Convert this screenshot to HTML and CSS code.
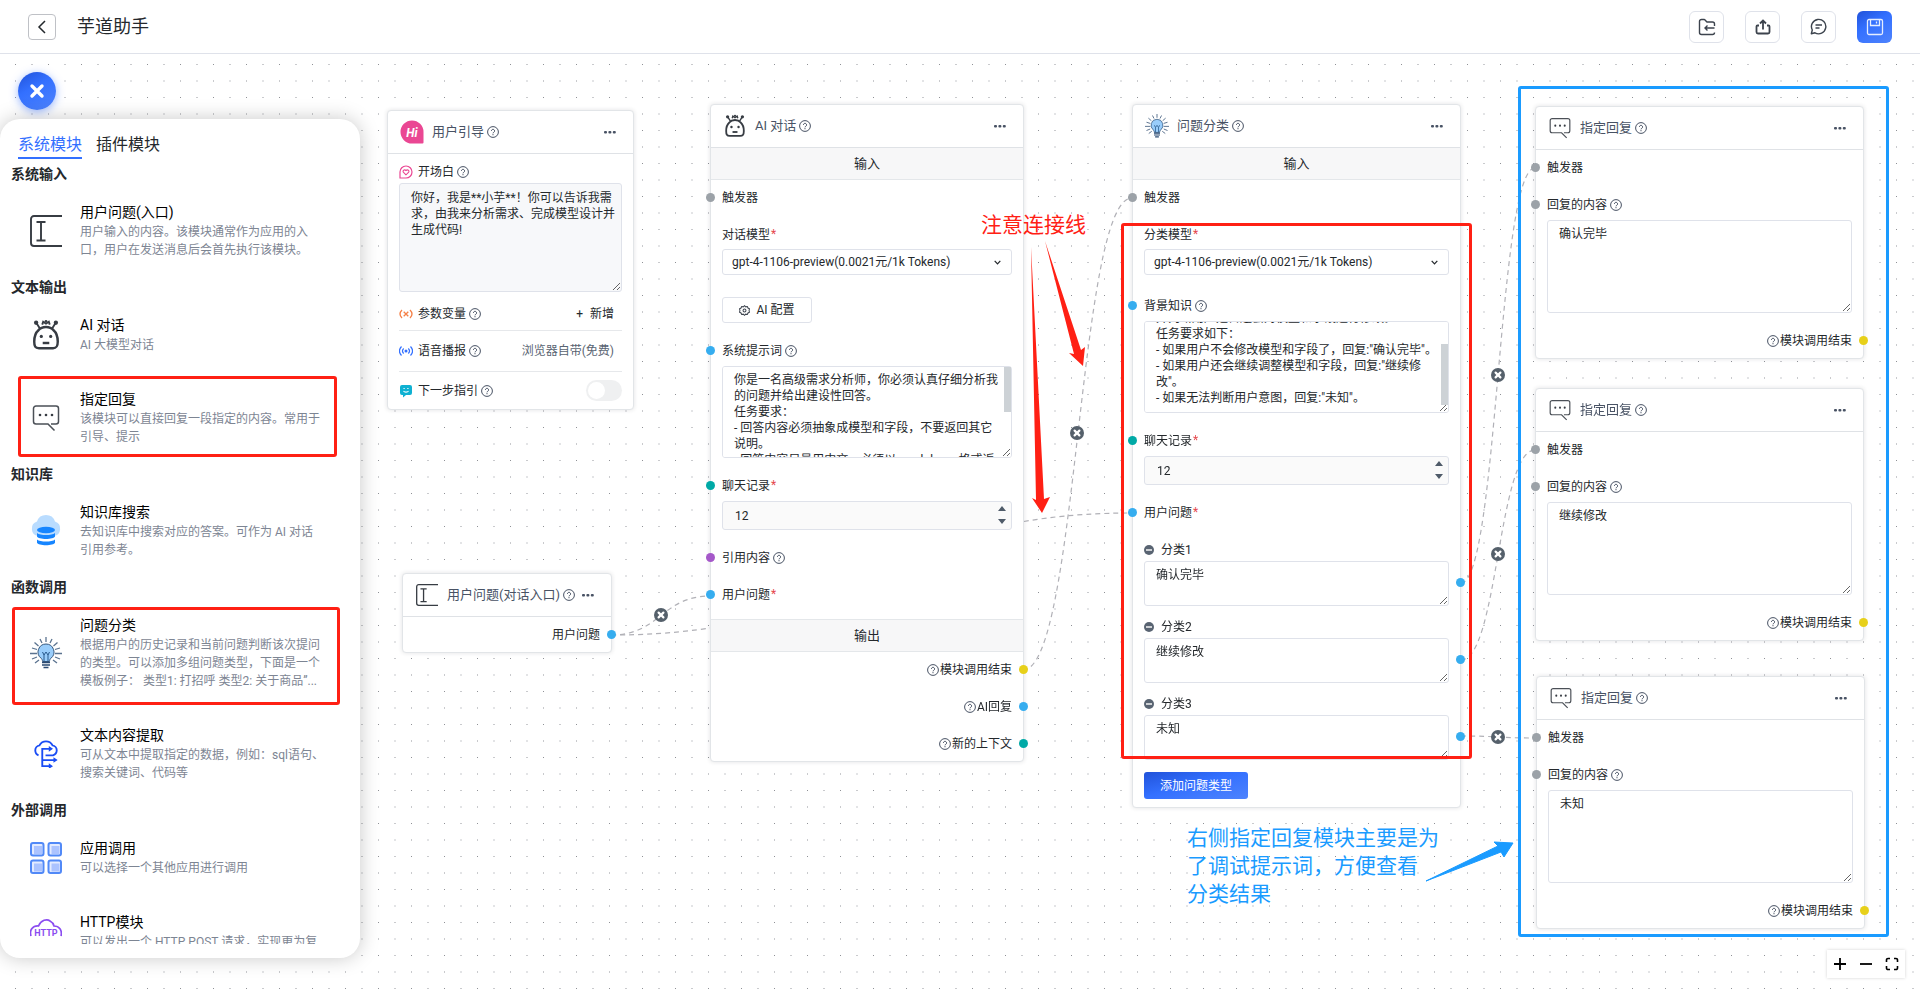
FILE: index.html
```html
<!DOCTYPE html>
<html lang="zh-CN">
<head>
<meta charset="utf-8">
<meta name="viewport" content="width=device-width, initial-scale=1">
<title>芋道助手</title>
<link rel="stylesheet" href="styles.css">
</head>
<body>
<svg class="sprite" aria-hidden="true">
  <symbol id="i-help" viewBox="0 0 12 12"><circle cx="6" cy="6" r="5.4" fill="none" stroke="currentColor" stroke-width="1"/><path d="M4.4 4.9a1.6 1.6 0 1 1 2.4 1.4c-.6.3-.8.5-.8 1" fill="none" stroke="currentColor" stroke-width="1"/><circle cx="6" cy="8.7" r=".6" fill="currentColor"/></symbol>
  <symbol id="i-more" viewBox="0 0 12 4"><rect x="0" y="1" width="3" height="2.6" rx="1" fill="currentColor"/><rect x="4.4" y="1" width="3" height="2.6" rx="1" fill="currentColor"/><rect x="8.8" y="1" width="3" height="2.6" rx="1" fill="currentColor"/></symbol>
  <symbol id="i-input" viewBox="0 0 32 32"><path d="M32 1H4a3 3 0 0 0-3 3v24a3 3 0 0 0 3 3h28M6.500 7h9M6.500 25.500h9M11 7v18.500" fill="none" stroke="#373c43" stroke-width="1.900"/></symbol>
  <symbol id="i-robot" viewBox="0 0 30 34"><path d="M7 12C9 9.500 12 8.500 15 8.500s6 1 8 3.500c3.500 3 4.500 7 4.500 12 0 5-1 7-5 7h-15c-4 0-5-2-5-7 0-5 1-9 4.500-12Z" fill="none" stroke="#373c43" stroke-width="2.600"/><path d="M8.500 10 5 4.500M21.500 10 25 4.500M11 6l1-3 3 2 3-2 1 3" fill="none" stroke="#373c43" stroke-width="2"/><circle cx="4.500" cy="4" r="2.300" fill="#373c43"/><circle cx="25.500" cy="4" r="2.300" fill="#373c43"/><circle cx="15" cy="2.500" r="1.500" fill="#373c43"/><circle cx="10" cy="18.500" r="1.700" fill="#373c43"/><circle cx="20" cy="18.500" r="1.700" fill="#373c43"/><path d="M11.500 25.500h7" stroke="#373c43" stroke-width="2.600"/></symbol>
  <symbol id="i-reply" viewBox="0 0 28 28"><path d="M19 20h5a2.500 2.500 0 0 0 2.500-2.500v-13A2.500 2.500 0 0 0 24 2H4a2.500 2.500 0 0 0-2.500 2.500v13A2.500 2.500 0 0 0 4 20h12l6.500 6.500" fill="none" stroke="#4b5057" stroke-width="1.500"/><circle cx="8" cy="11" r="1.300" fill="#373c43"/><circle cx="14" cy="11" r="1.300" fill="#373c43"/><circle cx="20" cy="11" r="1.300" fill="#373c43"/></symbol>
  <symbol id="i-bulb" viewBox="0 0 32 32"><g stroke="#5b7390" stroke-width="1.300"><path d="M16 0v5M10 2l2 4M22 2l-2 4M4.500 5.500 8.500 9M27.500 5.500 23.500 9M2 11l5 1.500M30 11l-5 1.500M0 16.500h7M32 16.500h-7M2 22l5-2M30 22l-5-2M5 26l4-3M27 26l-4-3"/></g><path d="M16 7a8 8 0 0 0-5 14.200c1 .8 1.500 2 1.500 3.300h7c0-1.300.5-2.500 1.500-3.300A8 8 0 0 0 16 7Z" fill="#99cdfb" stroke="#39597d" stroke-width="1"/><path d="m12.500 15 1.500 3 2-3 2 3 1.500-3M14 18v6M18 18v6" fill="none" stroke="#27588b" stroke-width="1"/><path d="M12 25.500h8M12 28h8M13.500 30.500h5" stroke="#2a4a72" stroke-width="1.400"/></symbol>
  <symbol id="i-cloud-db" viewBox="0 0 32 32"><path d="M8 21a7.500 7.500 0 0 1-1-14.500 9.500 9.500 0 0 1 18 0A7.500 7.500 0 0 1 24 21Z" fill="#b9dcff"/><ellipse cx="16" cy="15" rx="9" ry="3.300" fill="#1685ff"/><path d="M7 18c3 2.700 15 2.700 18 0v3.500c-1 3.300-17 3.300-18 0ZM7 24.500c3 2.700 15 2.700 18 0v3.200c-1 3.300-17 3.300-18 0Z" fill="#1685ff"/></symbol>
  <symbol id="i-extract" viewBox="0 0 26 30"><g fill="none" stroke="#1a4df5" stroke-width="2"><path d="M5 16.500C2.500 15.500 1.500 13.500 1.500 11c0-2.500 2-5 4.500-5.300C7.500 3 10 1.500 13 1.500s5.500 1.500 7 4.200c2.500.3 4.500 2.800 4.500 5.300s-1.500 4.500-4 5.500h-8M9 9.500h8M9 8.500V28h9M8 21.500h14"/></g><path d="m16 6.500 4.500 3-4.500 3ZM21 18.500l4.500 3-4.500 3ZM16 25l4.500 3-4.500 3Z" fill="#1a4df5"/></symbol>
  <symbol id="i-apps" viewBox="0 0 32 32"><g fill="#e3ebff" stroke="#5189f7" stroke-width="2"><rect x="1" y="1" width="12.500" height="12.500" rx="2"/><rect x="18.500" y="1" width="12.500" height="12.500" rx="2"/><rect x="1" y="18.500" width="12.500" height="12.500" rx="2"/><rect x="18.500" y="18.500" width="12.500" height="12.500" rx="2"/></g><path d="M4 4h8v8H4ZM21.500 4h8v8h-8ZM4 21.500h8v8H4ZM21.500 21.500h8v8h-8Z" fill="#abc3ff"/></symbol>
  <symbol id="i-minus" viewBox="0 0 10 10"><circle cx="5" cy="5" r="5" fill="#596472"/><path d="M2 5h6" stroke="#fff" stroke-width="1.400"/></symbol>
  <symbol id="i-chevron" viewBox="0 0 8 8"><path d="m1.500 2.500 2.500 2.700 2.500-2.700" fill="none" stroke="#24282c" stroke-width="1.100"/></symbol>
  <symbol id="i-steps" viewBox="0 0 8 18"><path d="M4 0 8 5H0ZM4 18 0 13h8Z" fill="#4f5b69"/></symbol>
  <symbol id="i-cut" viewBox="0 0 14 14"><circle cx="7" cy="7" r="7" fill="#55606b"/><path d="m4.600 4.600 4.800 4.800M9.400 4.600 4.600 9.400" stroke="#fff" stroke-width="2.200" stroke-linecap="round"/></symbol>
</svg>

<header class="topbar">
  <button class="back" aria-label="返回"><svg width="14" height="14" viewBox="0 0 14 14"><path d="M10 1 4 7l6 6" fill="none" stroke="#24282c" stroke-width="1.500"/></svg></button>
  <h1 class="topbar-title">芋道助手</h1>
  <div class="topbar-actions">
    <button class="tool" aria-label="导入"><svg width="18" height="18" viewBox="0 0 18 18"><path d="M16.500 8V6a2 2 0 0 0-2-2H9L7.500 2.500C7 1.700 6.500 1.500 6 1.500H3.500a2 2 0 0 0-2 2v11a2 2 0 0 0 2 2h11a2 2 0 0 0 2-2M16.500 10H7M9.500 7.500 7 10l2.500 2.500" fill="none" stroke="#3c434d" stroke-width="1.400"/></svg></button>
    <button class="tool" aria-label="导出"><svg width="16" height="16" viewBox="0 0 16 16"><path d="M4 6.500H2.500a1 1 0 0 0-1 1v5.500a1.500 1.500 0 0 0 1.500 1.500h10a1.500 1.500 0 0 0 1.500-1.500V7.500a1 1 0 0 0-1-1H12M8 10.500V2M5 4.500l3-3 3 3" fill="none" stroke="#3c434d" stroke-width="1.800"/></svg></button>
    <button class="tool" aria-label="对话"><svg width="17" height="17" viewBox="0 0 17 17"><path d="M1.300 15.700 2.300 12A7.200 7.200 0 1 1 5 14.800ZM5.500 7h6.500M5.500 10h4" fill="none" stroke="#3c434d" stroke-width="1.400" stroke-linejoin="round"/></svg></button>
    <button class="tool tool-save" aria-label="保存"><svg width="18" height="18" viewBox="0 0 18 18"><path d="M3 1.500h12A1.500 1.500 0 0 1 16.500 3v12a1.500 1.500 0 0 1-1.500 1.500H3A1.500 1.500 0 0 1 1.500 15V3A1.500 1.500 0 0 1 3 1.500ZM4.500 1.500v6h9v-6M10.500 3.500v2" fill="none" stroke="#e5edff" stroke-width="1.300"/></svg></button>
  </div>
</header>

<main class="canvas">
  <svg class="dots" aria-hidden="true">
    <defs><pattern id="grid" width="33" height="33" patternUnits="userSpaceOnUse" x="15" y="10"><rect width="1" height="1" fill="#8f9196"/><rect x="16" width="2" height="1" fill="#c9cacd"/><rect y="16" width="1" height="2" fill="#c9cacd"/><rect x="16" y="16" width="2" height="2" fill="#e3e4e6"/></pattern></defs>
    <rect width="100%" height="100%" fill="url(#grid)"/>
  </svg>
  <svg class="edges" width="1920" height="939" viewBox="0 54 1920 939" aria-hidden="true">
    <g class="edge-lines">
      <path d="M611 635C661 635 661 596 711 596"/>
      <path d="M611 635C871 635 871 513 1132 513"/>
      <path d="M1023 670C1078 670 1078 198 1132 198"/>
      <path d="M1461 583C1498 583 1498 168 1535 168"/>
      <path d="M1461 660C1498 660 1498 450 1535 450"/>
      <path d="M1461 736C1498 736 1498 738 1536 738"/>
    </g>
    <use href="#i-cut" x="654" y="608" width="14" height="14"/>
    <use href="#i-cut" x="1070" y="426" width="14" height="14"/>
    <use href="#i-cut" x="1491" y="368" width="14" height="14"/>
    <use href="#i-cut" x="1491" y="547" width="14" height="14"/>
    <use href="#i-cut" x="1491" y="730" width="14" height="14"/>
  </svg>

  <section class="node node-guide">
    <header class="node-head"><svg class="node-icon" viewBox="0 0 24 24"><path d="M12 .5A11.500 11.500 0 0 0 12 23.500H22.500a1 1 0 0 0 1-1V12A11.500 11.500 0 0 0 12 .5Z" fill="#ea4793"/><text x="12" y="16.500" text-anchor="middle" class="hi-mark">Hi</text></svg><h2>用户引导</h2><svg class="help"><use href="#i-help"/></svg><button class="more" aria-label="更多"><svg><use href="#i-more"/></svg></button></header>
    <div class="node-body guide-body">
      <label class="guide-label" for="welcome"><svg class="guide-icon" viewBox="0 0 14 14"><path d="M1 13V7a6 6 0 1 1 6 6Z" fill="#fff" stroke="#ea4793" stroke-width="1.200"/><path d="M7 9.800 4.300 7.200c-1-1.400 1-3.300 2.700-1.700 1.700-1.600 3.700.3 2.700 1.700Z" fill="none" stroke="#ea4793" stroke-width="1.100"/></svg>开场白<svg class="help"><use href="#i-help"/></svg></label>
      <textarea id="welcome" class="box guide-text">你好，我是**小芋**！你可以告诉我需
求，由我来分析需求、完成模型设计并
生成代码!</textarea>
      <div class="guide-row guide-vars"><span class="guide-label"><svg class="guide-icon" viewBox="0 0 14 14"><path d="M3 3C.5 5.500.5 8.500 3 11M11 3c2.500 2.500 2.500 5.500 0 8M4.700 4.700l4.600 4.600M9.300 4.700 4.700 9.300" fill="none" stroke="#f58047" stroke-width="1.300"/></svg>参数变量<svg class="help"><use href="#i-help"/></svg></span><button class="plain"><span>+</span>新增</button></div>
      <div class="guide-row"><span class="guide-label"><svg class="guide-icon" viewBox="0 0 14 14"><circle cx="7" cy="7" r="1.500" fill="#3370ff"/><path d="M4.700 4.500c-1.500 1.500-1.500 3.500 0 5M9.300 4.500c1.500 1.500 1.500 3.500 0 5M2.500 2.500c-2.500 2.700-2.500 6.300 0 9M11.500 2.500c2.500 2.700 2.500 6.300 0 9" fill="none" stroke="#3370ff" stroke-width="1.200"/></svg>语音播报<svg class="help"><use href="#i-help"/></svg></span><button class="plain plain-muted">浏览器自带(免费)</button></div>
      <div class="guide-row guide-last"><label class="guide-label" for="next-step"><svg class="guide-icon" viewBox="0 0 14 14"><path d="M3 1h8a2 2 0 0 1 2 2v6a2 2 0 0 1-2 2H7l-3 2.500V11H3a2 2 0 0 1-2-2V3a2 2 0 0 1 2-2Z" fill="#0fb1d2"/><path d="M4.500 4.500h1.200M8.300 4.500h1.200M4.500 7c1 1.500 4 1.500 5 0" fill="none" stroke="#fff" stroke-width="1.100"/></svg>下一步指引<svg class="help"><use href="#i-help"/></svg></label><input class="switch" type="checkbox" id="next-step"></div>
    </div>
  </section>

  <section class="node node-entry">
    <header class="node-head"><svg class="node-icon node-icon-s"><use href="#i-input"/></svg><h2>用户问题(对话入口)</h2><svg class="help"><use href="#i-help"/></svg><button class="more" aria-label="更多"><svg><use href="#i-more"/></svg></button></header>
    <div class="node-body"><div class="row row-out">用户问题<i class="port port-r blue"></i></div></div>
  </section>

  <section class="node node-ai">
    <header class="node-head"><svg class="node-icon"><use href="#i-robot"/></svg><h2>AI 对话</h2><svg class="help"><use href="#i-help"/></svg><button class="more" aria-label="更多"><svg><use href="#i-more"/></svg></button></header>
    <h3 class="band">输入</h3>
    <div class="node-body body-inputs">
      <div class="row"><i class="port grey"></i>触发器</div>
      <div class="field field-model"><label class="row" for="ai-model">对话模型<b class="req">*</b></label><div class="select-wrap"><select id="ai-model" class="box select"><option>gpt-4-1106-preview(0.0021元/1k Tokens)</option></select><svg class="chevron"><use href="#i-chevron"/></svg></div></div>
      <button class="box config"><svg width="11" height="11" viewBox="0 0 12 12"><path d="M6 .8 7.300 2l1.800-.4.700 1.700 1.600.9L11 6l.4 1.800-1.600.9-.7 1.700L7.300 10 6 11.200 4.700 10l-1.800.4-.7-1.700-1.600-.9L1 6l-.4-1.800 1.600-.9.700-1.700L4.700 2Z" fill="none" stroke="#3c434d" stroke-width="1.100"/><circle cx="6" cy="6" r="1.600" fill="none" stroke="#3c434d" stroke-width="1.100"/></svg>AI 配置</button>
      <div class="field"><label class="row" for="ai-prompt"><i class="port blue"></i>系统提示词<svg class="help"><use href="#i-help"/></svg></label><div class="scroll-wrap"><textarea id="ai-prompt" class="box area">你是一名高级需求分析师，你必须认真仔细分析我
的问题并给出建设性回答。
任务要求：
- 回答内容必须抽象成模型和字段，不要返回其它
说明。
- 回答内容尽量用中文，必须以 markdown 格式返
回。</textarea><i class="thumb thumb-top"></i></div></div>
      <div class="field"><label class="row" for="ai-history"><i class="port teal"></i>聊天记录<b class="req">*</b></label><div class="select-wrap"><input id="ai-history" class="box number" type="number" value="12"><svg class="steps"><use href="#i-steps"/></svg></div></div>
      <div class="row"><i class="port purple"></i>引用内容<svg class="help"><use href="#i-help"/></svg></div>
      <div class="row"><i class="port blue"></i>用户问题<b class="req">*</b></div>
    </div>
    <h3 class="band band-out">输出</h3>
    <div class="node-body">
      <div class="row row-out"><svg class="help"><use href="#i-help"/></svg>模块调用结束<i class="port port-r yellow"></i></div>
      <div class="row row-out"><svg class="help"><use href="#i-help"/></svg>AI回复<i class="port port-r blue"></i></div>
      <div class="row row-out"><svg class="help"><use href="#i-help"/></svg>新的上下文<i class="port port-r teal"></i></div>
    </div>
  </section>

  <section class="node node-classify">
    <header class="node-head"><svg class="node-icon"><use href="#i-bulb"/></svg><h2>问题分类</h2><svg class="help"><use href="#i-help"/></svg><button class="more" aria-label="更多"><svg><use href="#i-more"/></svg></button></header>
    <h3 class="band">输入</h3>
    <div class="node-body">
      <div class="row"><i class="port grey"></i>触发器</div>
      <div class="field field-model"><label class="row" for="cq-model">分类模型<b class="req">*</b></label><div class="select-wrap"><select id="cq-model" class="box select"><option>gpt-4-1106-preview(0.0021元/1k Tokens)</option></select><svg class="chevron"><use href="#i-chevron"/></svg></div></div>
      <div class="field"><label class="row" for="cq-background"><i class="port blue"></i>背景知识<svg class="help"><use href="#i-help"/></svg></label><div class="scroll-wrap"><textarea id="cq-background" class="box area">并判断用户是否还会对模型和字段进行修改。
任务要求如下：
- 如果用户不会修改模型和字段了，回复:"确认完毕"。
- 如果用户还会继续调整模型和字段，回复:"继续修
改"。
- 如果无法判断用户意图，回复:"未知"。</textarea><i class="thumb thumb-bottom"></i></div></div>
      <div class="field"><label class="row" for="cq-history"><i class="port teal"></i>聊天记录<b class="req">*</b></label><div class="select-wrap"><input id="cq-history" class="box number" type="number" value="12"><svg class="steps"><use href="#i-steps"/></svg></div></div>
      <div class="row"><i class="port blue"></i>用户问题<b class="req">*</b></div>
      <div class="kinds">
        <div class="kind"><label class="row" for="kind1"><svg class="minus"><use href="#i-minus"/></svg>分类1</label><div class="kind-box"><textarea id="kind1" class="box area">确认完毕</textarea><i class="port port-r blue"></i></div></div>
        <div class="kind"><label class="row" for="kind2"><svg class="minus"><use href="#i-minus"/></svg>分类2</label><div class="kind-box"><textarea id="kind2" class="box area">继续修改</textarea><i class="port port-r blue"></i></div></div>
        <div class="kind"><label class="row" for="kind3"><svg class="minus"><use href="#i-minus"/></svg>分类3</label><div class="kind-box"><textarea id="kind3" class="box area">未知</textarea><i class="port port-r blue"></i></div></div>
        <button class="add-kind">添加问题类型</button>
      </div>
    </div>
  </section>

  <section class="node node-reply reply-1">
    <header class="node-head"><svg class="node-icon node-icon-s"><use href="#i-reply"/></svg><h2>指定回复</h2><svg class="help"><use href="#i-help"/></svg><button class="more" aria-label="更多"><svg><use href="#i-more"/></svg></button></header>
    <div class="node-body">
      <div class="row"><i class="port grey"></i>触发器</div>
      <div class="field"><label class="row" for="reply1"><i class="port grey"></i>回复的内容<svg class="help"><use href="#i-help"/></svg></label><textarea id="reply1" class="box area">确认完毕</textarea></div>
      <div class="row row-out"><svg class="help"><use href="#i-help"/></svg>模块调用结束<i class="port port-r yellow"></i></div>
    </div>
  </section>
  <section class="node node-reply reply-2">
    <header class="node-head"><svg class="node-icon node-icon-s"><use href="#i-reply"/></svg><h2>指定回复</h2><svg class="help"><use href="#i-help"/></svg><button class="more" aria-label="更多"><svg><use href="#i-more"/></svg></button></header>
    <div class="node-body">
      <div class="row"><i class="port grey"></i>触发器</div>
      <div class="field"><label class="row" for="reply2"><i class="port grey"></i>回复的内容<svg class="help"><use href="#i-help"/></svg></label><textarea id="reply2" class="box area">继续修改</textarea></div>
      <div class="row row-out"><svg class="help"><use href="#i-help"/></svg>模块调用结束<i class="port port-r yellow"></i></div>
    </div>
  </section>
  <section class="node node-reply reply-3">
    <header class="node-head"><svg class="node-icon node-icon-s"><use href="#i-reply"/></svg><h2>指定回复</h2><svg class="help"><use href="#i-help"/></svg><button class="more" aria-label="更多"><svg><use href="#i-more"/></svg></button></header>
    <div class="node-body">
      <div class="row"><i class="port grey"></i>触发器</div>
      <div class="field"><label class="row" for="reply3"><i class="port grey"></i>回复的内容<svg class="help"><use href="#i-help"/></svg></label><textarea id="reply3" class="box area">未知</textarea></div>
      <div class="row row-out"><svg class="help"><use href="#i-help"/></svg>模块调用结束<i class="port port-r yellow"></i></div>
    </div>
  </section>

  <button class="close" aria-label="关闭"><svg width="16" height="16" viewBox="0 0 16 16"><path d="m3 3 10 10M13 3 3 13" stroke="#fff" stroke-width="3.400" stroke-linecap="round"/></svg></button>
  <aside class="panel">
    <nav class="tabs"><button class="tab tab-on">系统模块</button><button class="tab">插件模块</button></nav>
    <div class="module-list">
      <h2 class="group">系统输入</h2>
      <article class="module"><svg class="module-icon"><use href="#i-input"/></svg><div class="module-text"><h3>用户问题(入口)</h3><p>用户输入的内容。该模块通常作为应用的入口，用户在发送消息后会首先执行该模块。</p></div></article>
      <h2 class="group">文本输出</h2>
      <article class="module"><svg class="module-icon"><use href="#i-robot"/></svg><div class="module-text"><h3>AI 对话</h3><p>AI 大模型对话</p></div></article>
      <article class="module"><svg class="module-icon icon-small"><use href="#i-reply"/></svg><div class="module-text"><h3>指定回复</h3><p>该模块可以直接回复一段指定的内容。常用于引导、提示</p></div></article>
      <h2 class="group">知识库</h2>
      <article class="module"><svg class="module-icon"><use href="#i-cloud-db"/></svg><div class="module-text"><h3>知识库搜索</h3><p>去知识库中搜索对应的答案。可作为 AI 对话<span class="phrase">引用参考。</span></p></div></article>
      <h2 class="group">函数调用</h2>
      <article class="module"><svg class="module-icon"><use href="#i-bulb"/></svg><div class="module-text"><h3>问题分类</h3><p>根据用户的历史记录和当前问题判断该次提问的类型。可以添加多组问题类型，下面是一个模板例子： 类型1: 打招呼 类型2: 关于商品”...</p></div></article>
      <article class="module"><svg class="module-icon icon-small"><use href="#i-extract"/></svg><div class="module-text"><h3>文本内容提取</h3><p>可从文本中提取指定的数据，例如：sql语句、搜索关键词、代码等</p></div></article>
      <h2 class="group">外部调用</h2>
      <article class="module"><svg class="module-icon"><use href="#i-apps"/></svg><div class="module-text"><h3>应用调用</h3><p>可以选择一个其他应用进行调用</p></div></article>
      <article class="module"><svg class="module-icon" viewBox="0 0 32 32"><path d="M1 20C-1 14 3 9.500 8.500 10 11 4 17 2.500 20 5c2 1 3.500 3 4 5 5 0 8.500 4 7 10" fill="none" stroke="#8b4df0" stroke-width="1.700"/><text x="16" y="20" text-anchor="middle" class="http-mark">HTTP</text></svg><div class="module-text"><h3>HTTP模块</h3><p>可以发出一个 HTTP POST 请求，实现更为复</p></div></article>
    </div>
  </aside>

  <div class="mark mark-reply"></div>
  <div class="mark mark-question"></div>
  <div class="mark mark-classify"></div>
  <div class="mark mark-results"></div>
  <p class="note note-red">注意连接线</p>
  <p class="note note-blue">右侧指定回复模块主要是为<br>了调试提示词，方便查看<br>分类结果</p>
  <svg class="arrows" width="1920" height="939" viewBox="0 54 1920 939" aria-hidden="true">
    <path d="M1045 241 1081 350 1085 347 1083 366 1069 353 1074 354Z" fill="#ff2014"/>
    <path d="M1031 247 1044 499 1050 497 1042 513 1032 498 1036 500Z" fill="#ff2014"/>
    <path d="M1426 881 1498 846 1494 842 1513 843 1504 857 1501 852Z" fill="#1a9bff" stroke="#1a9bff" stroke-width="1"/>
  </svg>

  <div class="zoom">
    <button aria-label="放大"><svg width="14" height="14" viewBox="0 0 14 14"><path d="M7 1v12M1 7h12" stroke="#000" stroke-width="1.800"/></svg></button>
    <button aria-label="缩小"><svg width="14" height="14" viewBox="0 0 14 14"><path d="M1 7h12" stroke="#000" stroke-width="1.800"/></svg></button>
    <button aria-label="适应屏幕"><svg width="14" height="14" viewBox="0 0 14 14"><path d="M1.500 5V3a1.500 1.500 0 0 1 1.500-1.500h2M9 1.500h2A1.500 1.500 0 0 1 12.500 3v2M12.500 9v2a1.500 1.500 0 0 1-1.500 1.500H9M5 12.500H3A1.500 1.500 0 0 1 1.500 11V9" fill="none" stroke="#000" stroke-width="1.600"/></svg></button>
  </div>
</main>
<script src="main.js"></script>
</body>
</html>
```

FILE: styles.css
```css
* { box-sizing: border-box; margin: 0; padding: 0; }
body {
  min-height: 100vh;
  display: flex;
  flex-direction: column;
  background: #fff;
  color: #24282c;
  font: 12px/18px Roboto, "Noto Sans CJK SC", sans-serif;
}
button, input, select, textarea { font: inherit; color: inherit; }
button { background: none; border: 0; cursor: pointer; }
h1, h2, h3 { font-weight: 400; }
svg { display: block; flex: none; }
.sprite { position: absolute; width: 0; height: 0; }
.http-mark { font: 700 9px Roboto, sans-serif; fill: #8b4df0; }
.hi-mark { font: italic 700 12px Roboto, sans-serif; fill: #fff; }

/* top bar */
.topbar {
  height: 54px;
  display: flex;
  align-items: center;
  padding: 0 28px;
  border-bottom: 1px solid #dfe2ea;
}
.back {
  width: 28px; height: 26px;
  display: grid; place-items: center;
  border: 1px solid #bfc1c6;
  border-radius: 4px;
}
.topbar-title { margin-left: 21px; font-size: 18px; line-height: 26px; }
.topbar-actions { margin-left: auto; display: flex; gap: 21px; }
.tool {
  width: 35px; height: 32px;
  display: grid; place-items: center;
  border: 1px solid #dfe2ea;
  border-radius: 6px;
}
.tool-save { border: 0; background: linear-gradient(150deg, #2152d9 0%, #3370ff 40%, #4e83fd 100%); }

/* canvas */
.canvas { position: relative; flex: 1; overflow: hidden; }
.dots { position: absolute; inset: 0; width: 100%; height: 100%; }
.edges, .arrows { position: absolute; left: 0; top: 0; pointer-events: none; }
.edge-lines path { fill: none; stroke: #b1b1b7; stroke-width: 1.2; stroke-dasharray: 5 4; }

.node {
  position: absolute;
  border: 1px solid #e2e5e8;
  border-radius: 4px;
  background: #fff;
  box-shadow: 0 0 4px rgba(40, 50, 60, .14);
}
.node-guide { left: 387px; top: 56px; width: 247px; }
.node-entry { left: 402px; top: 519px; width: 210px; }
.node-ai { left: 710px; top: 50px; width: 314px; }
.node-classify { left: 1132px; top: 50px; width: 329px; }
.node-reply { left: 1535px; width: 329px; }
.reply-1 { top: 52px; }
.reply-2 { top: 334px; }
.reply-3 { left: 1536px; top: 622px; }

.node-head {
  height: 43px;
  display: flex;
  align-items: center;
  padding: 0 17px 0 12px;
  border-bottom: 1px solid #dfe2e6;
  color: #485264;
}
.node-head h2 { font-size: 13px; line-height: 20px; margin-left: 8px; }
.node-icon { width: 24px; height: 24px; }
.node-icon-s { width: 22px; height: 22px; margin-left: 1px; margin-right: 1px; }
.help { width: 12px; height: 12px; margin-left: 3px; color: #485264; }
.more { margin-left: auto; color: #485264; }
.more svg { width: 12px; height: 4px; }

.band {
  height: 32px;
  display: grid;
  place-items: center;
  background: #f7f7f8;
  border-bottom: 1px solid #e4e7ea;
  font-size: 13px;
}
.band-out { height: 33px; border-top: 1px solid #e4e7ea; }
.node-body { display: flex; flex-direction: column; gap: 19px; padding: 9px 11px 8px; }
.body-inputs { padding-bottom: 15px; }
.row { position: relative; display: flex; align-items: center; height: 18px; }
.row-out { justify-content: flex-end; }
.row-out .help { margin-right: 1px; }
.req { align-self: flex-start; color: #e5484d; font-weight: 400; line-height: 16px; margin-left: 1px; }
.port {
  position: absolute;
  left: -16px; top: 4px;
  width: 9px; height: 9px;
  border-radius: 50%;
}
.port-r { left: auto; right: -16px; }
.grey { background: #9ca2a8; }
.blue { background: #36adef; }
.teal { background: #00a9a6; }
.purple { background: #a558c9; }
.yellow { background: #e7d01a; }

.field { display: flex; flex-direction: column; gap: 6px; }
.field-model { gap: 5px; padding-bottom: 3px; }
.box { border: 1px solid #dfe2ea; border-radius: 3px; background: #fff; outline: 0; }
.select-wrap, .scroll-wrap, .kind-box { position: relative; display: flex; }
.select { appearance: none; width: 100%; height: 26px; padding: 0 9px; }
.chevron { position: absolute; right: 10px; top: 9px; width: 9px; height: 9px; pointer-events: none; }
.number { appearance: none; -moz-appearance: textfield; width: 100%; height: 29px; padding: 0 12px; background: #fafafa; }
.number::-webkit-inner-spin-button { display: none; }
.steps { position: absolute; right: 6px; top: 5px; width: 8px; height: 18px; }
.config { width: 90px; height: 26px; display: flex; align-items: center; justify-content: center; gap: 6px; }
.area {
  display: block;
  width: 100%; height: 92px;
  padding: 5px 0 6px 11px;
  line-height: 16px;
  resize: vertical;
  overflow: auto;
  white-space: pre;
  scrollbar-width: none;
}
.thumb { position: absolute; right: 1px; width: 7px; background: #cdd2d6; }
.thumb-top { top: 1px; height: 45px; }
.thumb-bottom { bottom: 8px; height: 61px; }

.kinds { display: flex; flex-direction: column; gap: 12px; }
.kind { display: flex; flex-direction: column; gap: 2px; }
.kind .area { height: 45px; }
.kind .port { top: 17px; }
.minus { width: 10px; height: 10px; margin-right: 7px; }
.add-kind {
  align-self: flex-start;
  width: 104px; height: 27px;
  border-radius: 3px;
  color: #fff;
  background: linear-gradient(165deg, #2152d9 0%, #3370ff 45%, #4e83fd 100%);
}
.node-reply .area { height: 93px; }

/* guide node */
.guide-body { gap: 0; padding-bottom: 0; }
.guide-label { display: flex; align-items: center; }
.guide-icon { width: 14px; height: 14px; margin-right: 5px; }
.guide-text {
  height: 109px;
  margin-top: 2px;
  padding: 6px 0 6px 11px;
  line-height: 16px;
  background: #f7f8fa;
  resize: vertical;
  white-space: pre;
}
.guide-row { height: 41px; display: flex; align-items: center; justify-content: space-between; border-bottom: 1px solid #e6e8eb; }
.guide-vars { height: 39px; padding-top: 6px; }
.guide-last { height: 37px; border: 0; }
.plain { display: flex; gap: 7px; padding-right: 8px; }
.plain-muted { color: #596472; }
.switch { appearance: none; width: 36px; height: 21px; border-radius: 11px; background: #eff0f1; padding: 2px; }
.switch::before { content: ""; display: block; width: 17px; height: 17px; border-radius: 50%; background: #fff; }

/* module panel */
.close {
  position: absolute;
  left: 18px; top: 18px;
  width: 38px; height: 38px;
  display: grid; place-items: center;
  border-radius: 50%;
  background: linear-gradient(150deg, #2152d9 0%, #3370ff 40%, #4e83fd 100%);
  box-shadow: 0 2px 8px rgba(51, 112, 255, .5);
}
.panel {
  position: absolute;
  left: 0; top: 65px; bottom: 35px;
  width: 360px;
  display: flex;
  flex-direction: column;
  padding: 14px 0;
  border-radius: 20px;
  background: #fff;
  box-shadow: 0 0 20px rgba(0, 0, 0, .22);
}
.tabs { display: flex; gap: 14px; padding: 0 18px; }
.tab { height: 26px; font-size: 16px; line-height: 24px; border-bottom: 2px solid transparent; }
.tab-on { color: #3370ff; border-color: #3370ff; }
.module-list { flex: 1; min-height: 0; overflow: hidden; padding: 5px 11px 0; }
.group { font-size: 14px; line-height: 21px; font-weight: 700; }
.module { display: flex; align-items: center; gap: 18px; padding: 17px 0 18px 19px; }
.module-icon { width: 32px; height: 32px; }
.icon-small { width: 28px; height: 28px; margin: 0 2px; }
.module-text { width: 248px; }
.module-text h3 { font-size: 14px; line-height: 21px; color: #000; }
.module-text p { color: #7d8593; }
.phrase { display: inline-block; }

/* annotations */
.mark { position: absolute; border: 3px solid #ff2014; border-radius: 3px; pointer-events: none; }
.mark-reply { left: 18px; top: 322px; width: 319px; height: 81px; }
.mark-question { left: 12px; top: 553px; width: 328px; height: 98px; }
.mark-classify { left: 1121px; top: 169px; width: 351px; height: 536px; }
.mark-results { left: 1518px; top: 32px; width: 371px; height: 851px; border-color: #1a9bff; }
.note { position: absolute; font-size: 21px; line-height: 28px; white-space: nowrap; }
.note-red { left: 981px; top: 157px; color: #ff2014; }
.note-blue { left: 1187px; top: 770px; color: #1a9bff; }

.zoom {
  position: absolute;
  right: 15px; bottom: 15px;
  display: flex;
  background: #fff;
  box-shadow: 0 0 3px rgba(0, 0, 0, .18);
}
.zoom button { width: 26px; height: 28px; display: grid; place-items: center; }
```

FILE: main.js
```js
// Long background text opens at its last line.
const background = document.getElementById('cq-background');
background.scrollTop = background.scrollHeight;
```
